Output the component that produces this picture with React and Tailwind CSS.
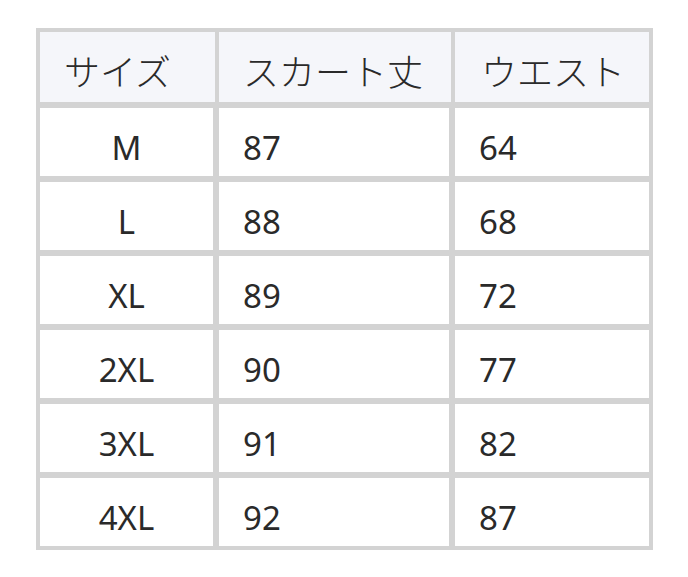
export default function App() {
  const rows = [
    ["M", "87", "64"],
    ["L", "88", "68"],
    ["XL", "89", "72"],
    ["2XL", "90", "77"],
    ["3XL", "91", "82"],
    ["4XL", "92", "87"],
  ];
  return (
    <div className="w-[688px] h-[577px] bg-white pt-[28px] pl-[36px]" style={{ fontFamily: '"Noto Sans", "Noto Sans CJK JP", sans-serif' }}>
      <div className="w-[617px] h-[522px] bg-[#d3d3d3] p-[4px] flex flex-col gap-[6px] text-[#2a2a2a]">
        <div className="flex h-[70px] gap-[4px] bg-[#d3d3d3] text-[36px] font-light">
          <div className="w-[175px] bg-[#f5f6fa] flex items-center pl-[24px] pt-[12px]">サイズ</div>
          <div className="w-[232px] bg-[#f5f6fa] flex items-center pl-[24px] pt-[12px]">スカート丈</div>
          <div className="w-[194px] bg-[#f5f6fa] flex items-center pl-[26px] pt-[12px]">ウエスト</div>
        </div>
        {rows.map((r, i) => (
          <div key={i} className="flex h-[68px] gap-[6px] text-[33px]">
            <div className="w-[173px] bg-white flex items-center justify-center pt-[12px]">{r[0]}</div>
            <div className="w-[230px] bg-white flex items-center pl-[24px] pt-[12px]">{r[1]}</div>
            <div className="w-[194px] bg-white flex items-center pl-[24px] pt-[12px]">{r[2]}</div>
          </div>
        ))}
      </div>
    </div>
  );
}
